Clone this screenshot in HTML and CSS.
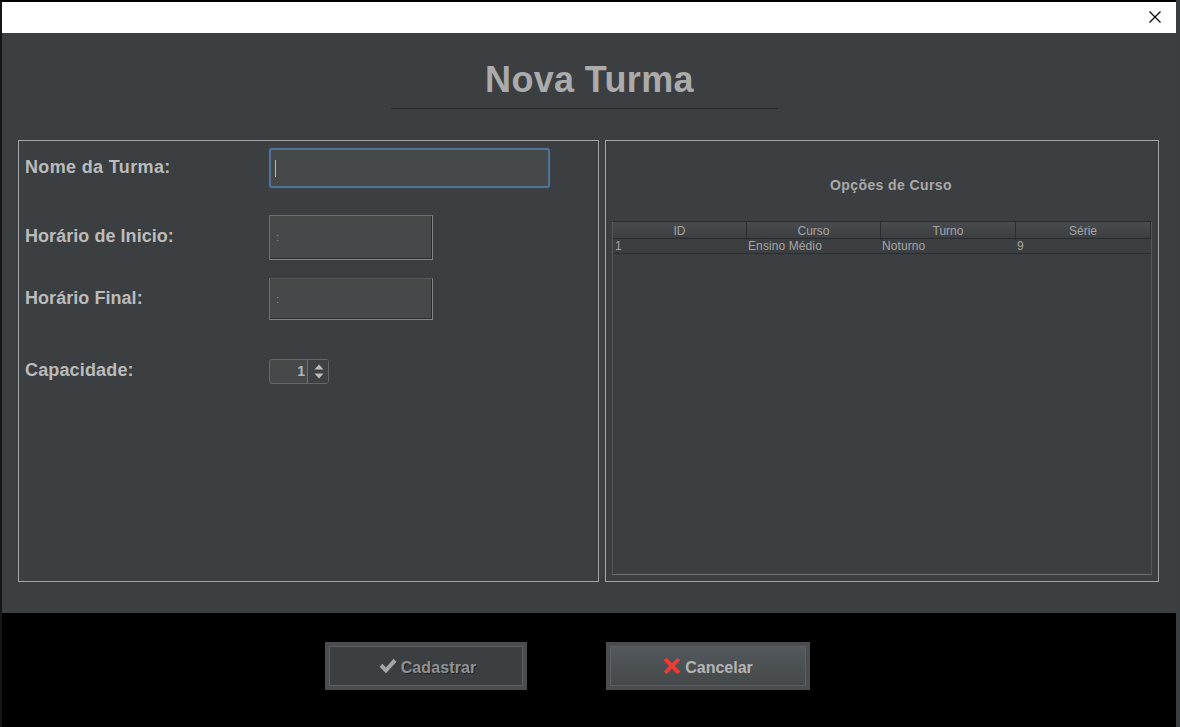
FILE: index.html
```html
<!DOCTYPE html>
<html lang="pt-BR">
<head>
  <meta charset="UTF-8">
  <title>Nova Turma</title>
  <link rel="stylesheet" href="styles.css">
</head>
<body>
  <div class="window">
    <div class="titlebar">
      <svg class="close-icon" width="12" height="12" viewBox="0 0 12 12"><path d="M0.5 0.5L11.5 11.5M11.5 0.5L0.5 11.5" stroke="#000" stroke-width="1.2" fill="none"/></svg>
    </div>

    <main class="content">
      <h1 class="title">Nova Turma</h1>
      <div class="title-rule"></div>

      <div class="panels">
        <section class="panel form-panel">
          <div class="form-row row-name">
            <label class="field-label">Nome da Turma:</label>
            <div class="input input-focus"><span class="caret"></span></div>
          </div>
          <div class="form-row row-start">
            <label class="field-label">Horário de Inicio:</label>
            <div class="input input-time"><span class="time-sep">:</span></div>
          </div>
          <div class="form-row row-end">
            <label class="field-label">Horário Final:</label>
            <div class="input input-time input-time-end"><span class="time-sep">:</span></div>
          </div>
          <div class="form-row row-cap">
            <label class="field-label">Capacidade:</label>
            <div class="spinner">
              <span class="spinner-value">1</span>
              <span class="spinner-arrows">
                <svg width="10" height="15" viewBox="0 0 10 15"><path d="M5 0.5L9.5 5.5H0.5Z M0.5 9.5H9.5L5 14.5Z" fill="#bbbbbb"/></svg>
              </span>
            </div>
          </div>
        </section>

        <section class="panel table-panel">
          <h2 class="table-title">Opções de Curso</h2>
          <div class="table-box">
            <div class="table-row table-head">
              <div>ID</div>
              <div>Curso</div>
              <div>Turno</div>
              <div>Série</div>
            </div>
            <div class="table-row table-body">
              <div>1</div>
              <div>Ensino Médio</div>
              <div>Noturno</div>
              <div>9</div>
            </div>
          </div>
        </section>
      </div>
    </main>

    <footer class="actions">
      <button class="btn btn-disabled">
        <svg class="btn-icon" width="18" height="16" viewBox="0 0 18 16"><path d="M0.5 8.8L3.4 5.8L7 9.4L14.6 0.8L17.5 3.8L7 15.2Z" fill="#a3a6a8"/></svg>
        <span>Cadastrar</span>
      </button>
      <button class="btn btn-cancel">
        <svg class="btn-icon" width="18" height="18" viewBox="0 0 18 18"><path d="M0.8 3.4L3.4 0.8L9 6.2L14.6 0.8L17.2 3.4L11.9 9L17.2 14.6L14.6 17.2L9 11.8L3.4 17.2L0.8 14.6L6.1 9Z" fill="#ee3b36"/></svg>
        <span>Cancelar</span>
      </button>
    </footer>
  </div>
</body>
</html>
```

FILE: styles.css
```css
html, body {
  margin: 0;
  padding: 0;
}
body {
  width: 1180px;
  height: 727px;
  overflow: hidden;
  background: #3a3d3f;
  font-family: "Liberation Sans", Arial, sans-serif;
}
.window {
  display: flex;
  flex-direction: column;
  width: 1176px;
  height: 727px;
  border-top: 2px solid #000;
  border-left: 2px solid #14171a;
  box-sizing: border-box;
}
.titlebar {
  display: flex;
  justify-content: flex-end;
  align-items: center;
  height: 31px;
  box-sizing: border-box;
  padding: 0 15px 2px 0;
  background: #fff;
}
.close-icon {
  display: block;
}

.content {
  display: flex;
  flex-direction: column;
  height: 580px;
  box-sizing: border-box;
  padding: 0 17px 0 16px;
  background: #3c3f41;
}
.title {
  margin: 26px 0 0;
  padding-left: 2px;
  height: 41px;
  font-size: 36px;
  line-height: 42px;
  font-weight: bold;
  letter-spacing: 0.35px;
  text-align: center;
  color: #ababab;
}
.title-rule {
  width: 387px;
  height: 1px;
  margin: 8px 0 0 373px;
  background: #26282a;
}
.panels {
  display: flex;
  gap: 6px;
  margin-top: 31px;
}
.panel {
  height: 442px;
  box-sizing: border-box;
  border: 1px solid #a3a5a6;
}

.form-panel {
  width: 581px;
}
.form-row {
  display: flex;
  align-items: flex-start;
}
.field-label {
  width: 244px;
  padding-left: 6px;
  font-size: 18px;
  font-weight: bold;
  line-height: 21px;
  letter-spacing: 0.05px;
  color: #bbbbbb;
}
.row-name { margin-top: 7px; }
.row-name .field-label { margin-top: 9px; letter-spacing: 0.35px; }
.row-start { margin-top: 27px; }
.row-start .field-label { margin-top: 11px; }
.row-end { margin-top: 18px; }
.row-end .field-label { margin-top: 10px; }
.row-cap { margin-top: 39px; }
.row-cap .field-label { margin-top: 1px; letter-spacing: 0.15px; }

.input {
  box-sizing: border-box;
  background: #45494a;
  border: 1px solid #75787a;
}
.input-focus {
  display: flex;
  align-items: center;
  width: 281px;
  height: 40px;
  padding-left: 4px;
  border: 2px solid #4f7297;
  border-radius: 3px;
  box-shadow: 0 0 1px #4f7297;
}
.caret {
  width: 1px;
  height: 17px;
  background: #b9b9b9;
}
.input-time {
  display: flex;
  align-items: center;
  width: 164px;
  height: 45px;
  padding-left: 6px;
  border-color: #6d7072;
  border-bottom-color: #84878a;
  border-right-color: #84878a;
  box-shadow: inset -1px -1px 0 #2a2c2d;
}
.input-time-end {
  height: 42px;
  border-top-color: #55585a;
}
.time-sep {
  font-size: 11px;
  line-height: 11px;
  color: #8f9192;
}

.spinner {
  display: flex;
  width: 60px;
  height: 25px;
  box-sizing: border-box;
  background: #45494a;
  border: 1px solid #64676a;
  border-radius: 3px;
}
.spinner-value {
  width: 37px;
  box-sizing: border-box;
  padding-right: 2px;
  text-align: right;
  font-size: 14px;
  font-weight: bold;
  line-height: 22px;
  color: #b4b4b4;
}
.spinner-arrows {
  display: flex;
  flex: 1;
  align-items: center;
  justify-content: center;
  padding-left: 1px;
  border-left: 1px solid #6f7274;
  background: #3f4244;
}
.spinner-arrows svg {
  display: block;
}

.table-panel {
  width: 554px;
  padding: 0 6px;
}
.table-title {
  margin: 36px 0 0;
  padding-left: 18px;
  height: 16px;
  font-size: 14px;
  font-weight: bold;
  line-height: 17px;
  letter-spacing: 0.4px;
  text-align: center;
  color: #a9a9a9;
}
.table-box {
  width: 540px;
  height: 354px;
  margin-top: 28px;
  box-sizing: border-box;
  border: 1px solid #292b2c;
  border-bottom-color: #6f7274;
  border-right-color: #55585a;
  border-left-color: #55585a;
}
.table-row {
  display: grid;
  grid-template-columns: 134px 134px 135px 1fr;
}
.table-head {
  height: 16px;
  background: linear-gradient(#484c4e, #3c3f41);
  border-bottom: 1px solid #292b2c;
  font-size: 12px;
  line-height: 18px;
  text-align: center;
  color: #a5a5a5;
}
.table-head div {
  border-right: 1px solid #292b2c;
}
.table-body {
  height: 14px;
  border-bottom: 1px solid #2b2d2f;
  font-size: 12px;
  line-height: 15px;
  letter-spacing: 0.1px;
  color: #a5a5a5;
}
.table-body div {
  padding-left: 1px;
}
.table-body div:first-child {
  padding-left: 2px;
}

.actions {
  display: flex;
  flex: 1;
  align-items: flex-start;
  gap: 79px;
  padding: 29px 0 0 323px;
  background: #000;
}
.btn {
  display: flex;
  align-items: center;
  justify-content: center;
  gap: 4px;
  width: 202px;
  height: 48px;
  padding: 3px 0 0;
  font-family: inherit;
  font-size: 16px;
  font-weight: bold;
  border: 4px solid #4a4d4f;
  outline: 1px solid #5d6062;
  outline-offset: -5px;
}
.btn-icon {
  display: block;
  margin-top: -4px;
}
.btn-disabled {
  padding-left: 2px;
  background: #3c3f41;
  color: #8f9295;
  letter-spacing: 0.1px;
  text-shadow: 1px 1px 0 #222;
}
.btn-disabled .btn-icon {
  margin-left: 1px;
}
.btn-cancel {
  width: 204px;
  background: linear-gradient(#53595d, #44484a);
  color: #b5b5b5;
}
```
